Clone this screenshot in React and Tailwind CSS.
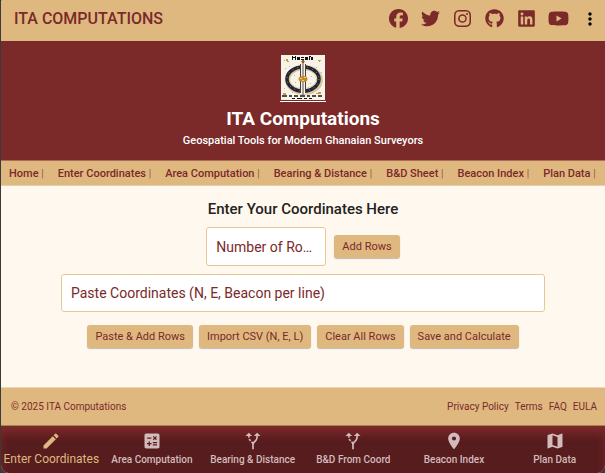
import {
  FaFacebook,
  FaTwitter,
  FaGithub,
  FaLinkedin,
  FaYoutube,
} from "react-icons/fa6";
import { BsInstagram } from "react-icons/bs";
import {
  MdMoreVert,
  MdEdit,
  MdCalculate,
  MdAltRoute,
  MdLocationOn,
  MdMap,
} from "react-icons/md";

const socials = [
  { label: "Facebook", Icon: FaFacebook, size: 19 },
  { label: "Twitter", Icon: FaTwitter, size: 19 },
  { label: "Instagram", Icon: BsInstagram, size: 17 },
  { label: "GitHub", Icon: FaGithub, size: 19 },
  { label: "LinkedIn", Icon: FaLinkedin, size: 19 },
  { label: "YouTube", Icon: FaYoutube, size: 21 },
];

const menu = [
  "Home",
  "Enter Coordinates",
  "Area Computation",
  "Bearing & Distance",
  "B&D Sheet",
  "Beacon Index",
  "Plan Data",
];

const tabs = [
  { label: "Enter Coordinates", Icon: MdEdit, active: true },
  { label: "Area Computation", Icon: MdCalculate },
  { label: "Bearing & Distance", Icon: MdAltRoute },
  { label: "B&D From Coord", Icon: MdAltRoute },
  { label: "Beacon Index", Icon: MdLocationOn },
  { label: "Plan Data", Icon: MdMap },
];

function Logo() {
  return (
    <svg viewBox="0 0 46 47" className="h-[47px] w-[46px]" role="img" aria-label="ITA Computations logo">
      <rect x="1" width="44" height="45" fill="#f8f3e8" />
      <rect y="46" width="46" height="1" fill="#fff" />
      <ellipse cx="24" cy="25" rx="16.500" ry="12.500" fill="none" stroke="#d9c8a2" strokeWidth="5" />
      <ellipse cx="23" cy="24" rx="16" ry="12" fill="none" stroke="#22243a" strokeWidth="3.500" />
      <ellipse cx="23" cy="24" rx="16" ry="12" fill="none" stroke="#b98b3c" strokeWidth="1" strokeDasharray="1 4" />
      <ellipse cx="23" cy="24" rx="13.500" ry="9.500" fill="none" stroke="#d8b978" strokeWidth="1" strokeDasharray="2 1" />
      <path d="M20 8h6v31h-6z" fill="#f8f3e8" />
      <path d="M20.500 9v29M25.500 9v29" stroke="#4b3f33" strokeWidth="1" />
      <path d="M23 5v35" stroke="#57504a" strokeWidth="1" />
      <ellipse cx="23" cy="24" rx="4.500" ry="3" fill="#c78a28" />
      <path d="M20 23h2v1h-2zM24 22h2v1h-2zM22 25h2v1h-2z" fill="#f4cf72" />
      <circle cx="23" cy="6.500" r="1.500" fill="#8b5a24" />
      <path d="M6 4h2v2H6zM7 6h2v1H7zM4 5h1v1H4zM38 5h3v1h-3zM39 6h1v1h-1zM3 38h3v2H3zM38 37h3v2h-3zM36 38h2v1h-2z" fill="#c99a45" />
      <path d="M5 13h1v1H5zM9 11h1v1H9zM36 12h1v1h-1zM41 17h1v1h-1zM4 33h1v1H4zM12 37h1v1h-1zM32 37h1v1h-1zM40 31h1v1h-1zM14 20h1v1h-1zM31 21h1v1h-1zM15 27h1v1h-1zM30 28h1v1h-1z" fill="#d8b36a" />
      <path d="M12 1h1v4h-1zM15 1h1v4h-1zM12 2h4v1h-4zM17 2h3v3h-3zM21 2h3v1h-3zM21 4h3v1h-3zM25 2h3v3h-3zM29 1h1v4h-1zM29 1h2v1h-2zM31 2h2v3h-2z" fill="#111" />
      <path d="M2 41h5M9 41h3M14 41h4M20 41h5M27 41h3M32 41h4M38 41h4" stroke="#171717" strokeWidth="1.500" />
      <path d="M12 43.500h3M17 43.500h5M24 43.500h3M29 43.500h3" stroke="#171717" strokeWidth="1" />
    </svg>
  );
}

function ActionButton({ children }) {
  return (
    <button
      type="button"
      className="h-[23px] whitespace-nowrap rounded-[3px] bg-[#dfb880] px-2 text-[11px] leading-4 text-[#7b2929] shadow-[0_1px_1px_rgba(0,0,0,0.25)]"
    >
      {children}
    </button>
  );
}

export default function App() {
  return (
    <div className="min-h-screen bg-[#3a3a3c] pl-px font-[Roboto,sans-serif] text-[#7b2929]">
      <div className="flex min-h-screen flex-col overflow-hidden rounded-b-lg rounded-tl-xs bg-[#fff8ee]">
        <header className="flex h-[41px] items-center justify-between bg-[#dfb880] pb-1 pl-[13px] pr-[5px]">
          <div className="text-base font-medium">ITA COMPUTATIONS</div>
          <div className="flex items-center">
            <nav aria-label="Social links" className="flex items-center">
              {socials.map(({ label, Icon, size }) => (
                <a key={label} href="#" aria-label={label} className="flex w-8 justify-center">
                  <Icon size={size} />
                </a>
              ))}
            </nav>
            <button type="button" aria-label="More options" className="ml-[6px] text-black">
              <MdMoreVert size={20} />
            </button>
          </div>
        </header>

        <section className="flex h-[119px] flex-col items-center bg-[#7b2929] pt-[14px] text-white">
          <Logo />
          <h1 className="mt-[5px] text-[19px] font-bold leading-6">ITA Computations</h1>
          <p className="mt-[2px] text-[11px] font-medium leading-4">
            Geospatial Tools for Modern Ghanaian Surveyors
          </p>
        </section>

        <nav
          aria-label="Main"
          className="flex h-[26px] items-center gap-[14px] overflow-hidden border-y border-t-[#ad6b58] border-b-[#e9cfa7] bg-[#dfb880] px-2 pt-px"
        >
          {menu.map((item) => (
            <a key={item} href="#" className="whitespace-nowrap text-[11px] font-medium leading-4">
              {item} <span className="font-light">|</span>
            </a>
          ))}
        </nav>

        <main className="flex grow flex-col items-center px-[60px] pb-[39px] pt-[14px]">
          <h2 className="text-[15px] font-medium leading-[18px] text-[#222]">Enter Your Coordinates Here</h2>
          <div className="mt-[9px] flex items-center gap-2">
            <input
              aria-label="Number of Rows"
              placeholder="Number of Ro…"
              className="h-[39px] w-[120px] rounded-[3px] border border-[#e8c797] bg-white px-[9px] text-sm outline-none placeholder:text-[#7b2929] placeholder:opacity-100"
            />
            <ActionButton>Add Rows</ActionButton>
          </div>
          <input
            aria-label="Paste Coordinates (N, E, Beacon per line)"
            placeholder="Paste Coordinates (N, E, Beacon per line)"
            className="mt-2 h-[38px] w-full rounded-[3px] border border-[#e8c797] bg-white px-[9px] text-sm outline-none placeholder:text-[#7b2929] placeholder:opacity-100"
          />
          <div className="mt-[13px] flex gap-[6px]">
            <ActionButton>Paste &amp; Add Rows</ActionButton>
            <ActionButton>Import CSV (N, E, L)</ActionButton>
            <ActionButton>Clear All Rows</ActionButton>
            <ActionButton>Save and Calculate</ActionButton>
          </div>
        </main>

        <footer className="flex h-[39px] items-center justify-between border-y border-t-[#ecd6b4] border-b-[#a98255] bg-[#dfb880] pl-[10px] pr-2 text-[10px]">
          <p>© 2025 ITA Computations</p>
          <div className="flex gap-[6px]">
            <a href="#">Privacy Policy</a>
            <a href="#">Terms</a>
            <a href="#">FAQ</a>
            <a href="#">EULA</a>
          </div>
        </footer>

        <nav
          aria-label="Tools"
          className="grid h-[47px] grid-cols-6 bg-[#571c1e] text-[#d3bbbc] shadow-[inset_0_8px_10px_#7b2929]"
        >
          {tabs.map(({ label, Icon, active }) => (
            <a
              key={label}
              href="#"
              aria-current={active ? "page" : undefined}
              className={`flex flex-col items-center whitespace-nowrap pt-[5px] ${
                active ? "text-xs text-[#dfb880]" : "text-[10px] font-medium"
              }`}
            >
              <Icon size={20} />
              <span className={active ? "leading-4" : "leading-[18px]"}>{label}</span>
            </a>
          ))}
        </nav>
      </div>
    </div>
  );
}
